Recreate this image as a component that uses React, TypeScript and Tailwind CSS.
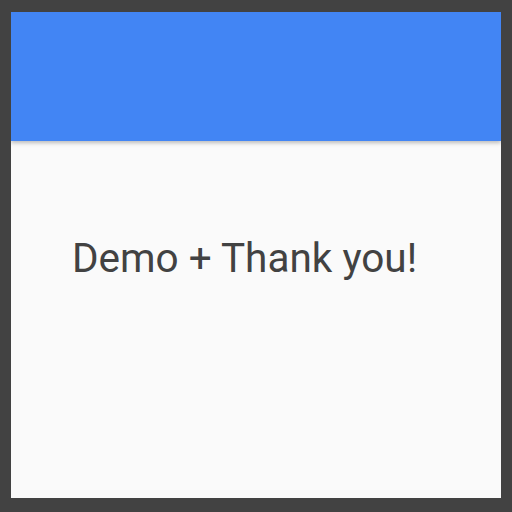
export default function App() {
  return (
    <div className="w-[512px] h-[512px] bg-[#424242] pt-[12px] pl-[11px] pr-[11px] pb-[14px]">
      <div className="w-full h-full flex flex-col bg-[#fafafa] overflow-hidden">
        <div className="h-[129px] shrink-0 bg-[#4285f4] shadow-[0_2px_4px_rgba(0,0,0,0.25)]" />
        <div className="pl-[61px] pt-[93px]">
          <h1 className="text-[40.5px] leading-[48px] text-[#424242] font-['Roboto',sans-serif] font-normal">
            Demo + Thank you!
          </h1>
        </div>
      </div>
    </div>
  );
}
